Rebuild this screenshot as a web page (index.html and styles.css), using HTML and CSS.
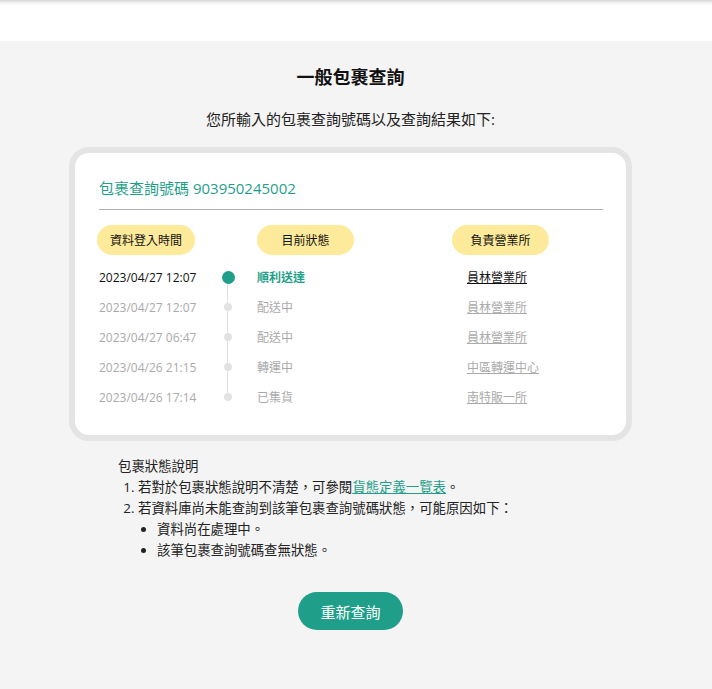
FILE: index.html
```html
<!DOCTYPE html>
<html lang="zh-Hant">
<head>
<meta charset="utf-8">
<title>一般包裹查詢</title>
<link rel="stylesheet" href="styles.css">
</head>
<body>
<header class="topbar"></header>
<main class="main">
  <h1 class="title">一般包裹查詢</h1>
  <p class="subtitle">您所輸入的包裹查詢號碼以及查詢結果如下:</p>

  <section class="card">
    <div class="tracking">包裹查詢號碼 903950245002</div>
    <div class="head-row">
      <span class="pill pill-date">資料登入時間</span>
      <span class="pill">目前狀態</span>
      <span class="pill">負責營業所</span>
    </div>
    <div class="rows">
      <div class="row row-current first">
        <span class="date">2023/04/27 12:07</span>
        <span class="dot-cell"><span class="dot"></span></span>
        <span class="status">順利送達</span>
        <a class="place" href="#">員林營業所</a>
      </div>
      <div class="row">
        <span class="date">2023/04/27 12:07</span>
        <span class="dot-cell"><span class="dot"></span></span>
        <span class="status">配送中</span>
        <a class="place" href="#">員林營業所</a>
      </div>
      <div class="row">
        <span class="date">2023/04/27 06:47</span>
        <span class="dot-cell"><span class="dot"></span></span>
        <span class="status">配送中</span>
        <a class="place" href="#">員林營業所</a>
      </div>
      <div class="row">
        <span class="date">2023/04/26 21:15</span>
        <span class="dot-cell"><span class="dot"></span></span>
        <span class="status">轉運中</span>
        <a class="place" href="#">中區轉運中心</a>
      </div>
      <div class="row last">
        <span class="date">2023/04/26 17:14</span>
        <span class="dot-cell"><span class="dot"></span></span>
        <span class="status">已集貨</span>
        <a class="place" href="#">南特販一所</a>
      </div>
    </div>
  </section>

  <section class="notes">
    <div class="notes-title">包裹狀態說明</div>
    <ol class="notes-list">
      <li>若對於包裹狀態說明不清楚，可參閱<a class="notes-link" href="#">貨態定義一覽表</a>。</li>
      <li>若資料庫尚未能查詢到該筆包裹查詢號碼狀態，可能原因如下：
        <ul class="notes-sub">
          <li>資料尚在處理中。</li>
          <li>該筆包裹查詢號碼查無狀態。</li>
        </ul>
      </li>
    </ol>
  </section>

  <div class="actions">
    <button class="btn" type="button">重新查詢</button>
  </div>
</main>
</body>
</html>
```
FILE: styles.css
```css
* { box-sizing: border-box; }

html, body {
  margin: 0;
  padding: 0;
}

body {
  background: #f4f4f4;
  font-family: "Open Sans", "Noto Sans CJK TC", sans-serif;
  color: #222;
  min-height: 689px;
}

.topbar {
  height: 41px;
  background: linear-gradient(to bottom, #d6d6d6 0px, #ececec 2px, #fafafa 4px, #ffffff 6px, #ffffff 100%);
}

.main {
  padding: 0 11px 40px 0;
  display: flex;
  flex-direction: column;
  align-items: center;
}

.title {
  margin: 24px 0 0;
  font-size: 18px;
  line-height: 24px;
  font-weight: 700;
  color: #111;
}

.subtitle {
  margin: 20px 0 0;
  font-size: 15px;
  line-height: 20px;
  color: #222;
}

.card {
  margin-top: 18px;
  width: 563px;
  background: #fff;
  border: 6px solid #e4e4e4;
  border-radius: 20px;
  padding: 24px 23px 23px 24px;
}

.tracking {
  font-size: 15px;
  line-height: 22px;
  color: #1f9f8a;
  padding-bottom: 10px;
  border-bottom: 1px solid #b3b3b3;
}

.head-row {
  margin-top: 15px;
  display: grid;
  grid-template-columns: 158px 195px 1fr;
  align-items: center;
}

.pill {
  justify-self: start;
  width: 97px;
  height: 30px;
  border-radius: 15px;
  background: #fdea9a;
  font-size: 12px;
  color: #111;
  display: flex;
  align-items: center;
  justify-content: center;
}

.pill-date {
  margin-left: -2px;
  width: 98px;
}

.rows {
  margin-top: 7px;
}

.row {
  display: grid;
  grid-template-columns: 119px 20px 229px 1fr;
  align-items: center;
  height: 30px;
  font-size: 12px;
  color: #aaa;
}

.status {
  padding-left: 19px;
}

.place {
  justify-self: start;
  color: #aaa;
  text-decoration: underline;
}

.row-current .date,
.row-current .place {
  color: #111;
}

.row-current .status {
  color: #1f9f8a;
  font-weight: 700;
}

.dot-cell {
  position: relative;
  height: 30px;
  display: flex;
  align-items: center;
  justify-content: center;
}

.dot-cell::before {
  content: "";
  position: absolute;
  left: 9px;
  width: 1px;
  top: 0;
  bottom: 0;
  background: #e2e2e2;
}

.first .dot-cell::before { top: 15px; }
.last .dot-cell::before { bottom: 15px; }

.dot {
  position: relative;
  width: 8px;
  height: 8px;
  border-radius: 50%;
  background: #e2e2e2;
}

.row-current .dot {
  width: 13px;
  height: 13px;
  background: #1f9f8a;
}

.notes {
  width: 563px;
  margin-top: 15px;
  padding-left: 49px;
  font-size: 13.4px;
  line-height: 21px;
  color: #222;
}

.notes-list {
  margin: 0;
  padding-left: 20px;
}

.notes-sub {
  margin: 0;
  padding-left: 19px;
  list-style-type: disc;
}

.notes-link {
  color: #1f9f8a;
  text-decoration: underline;
}

.actions {
  margin-top: 31px;
}

.btn {
  width: 105px;
  height: 38px;
  border: none;
  border-radius: 19px;
  background: #1f9f8a;
  color: #fff;
  font-family: "Open Sans", "Noto Sans CJK TC", sans-serif;
  font-size: 15px;
  padding: 0;
  cursor: pointer;
}
```
